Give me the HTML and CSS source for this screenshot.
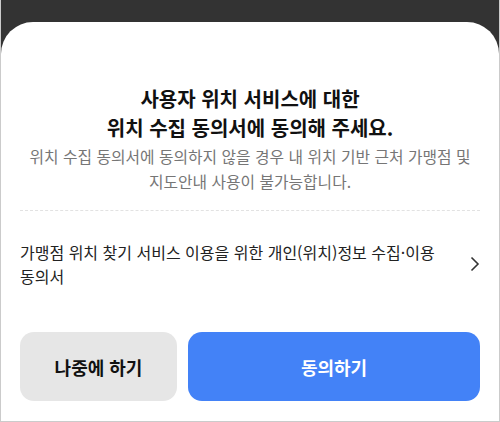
FILE: index.html
```html
<!DOCTYPE html>
<html lang="ko">
<head>
    <meta charset="UTF-8">
    <meta name="viewport" content="width=device-width, initial-scale=1.0">
    <title>위치 수집 동의</title>
    <link rel="stylesheet" href="styles.css">
</head>
<body>
    <div class="screen">
        <div class="dim"></div>
        <div class="sheet">
            <h1 class="title">사용자 위치 서비스에 대한<br>위치 수집 동의서에 동의해 주세요.</h1>
            <p class="desc">위치 수집 동의서에 동의하지 않을 경우 내 위치 기반 근처 가맹점 및<br>지도안내 사용이 불가능합니다.</p>
            <div class="divider"></div>
            <a class="terms" href="#">
                <span class="terms-text">가맹점 위치 찾기 서비스 이용을 위한 개인(위치)정보 수집·이용 동의서</span>
                <svg class="chevron" width="10" height="16" viewBox="0 0 10 16">
                    <path d="M1.5 1.5 L8 8 L1.5 14.5" fill="none" stroke="#333" stroke-width="1.6"/>
                </svg>
            </a>
            <div class="actions">
                <button class="btn btn-later" type="button">나중에 하기</button>
                <button class="btn btn-agree" type="button">동의하기</button>
            </div>
        </div>
    </div>
</body>
</html>
```

FILE: styles.css
```css
html, body {
    margin: 0;
    padding: 0;
}
body {
    font-family: "Noto Sans CJK KR", "Noto Sans", sans-serif;
    background-color: #fff;
    word-break: keep-all;
}
.screen {
    width: 500px;
    height: 422px;
    box-sizing: border-box;
    border: 1px solid #cbcbcb;
    border-top: 0;
    background-color: #333;
    display: flex;
    flex-direction: column;
    overflow: hidden;
}
.dim {
    height: 22px;
    flex-shrink: 0;
}
.sheet {
    flex: 1;
    background-color: #fff;
    border-radius: 32px 32px 0 0;
    padding: 62px 19px 0;
    display: flex;
    flex-direction: column;
}
.title {
    margin: 0;
    text-align: center;
    font-size: 20px;
    line-height: 29px;
    font-weight: 700;
    color: #111;
}
.desc {
    margin: 2px 0 0;
    text-align: center;
    font-size: 15.8px;
    line-height: 25px;
    color: #767676;
}
.divider {
    margin-top: 16px;
    border-top: 1px dashed #e2e2e2;
}
.terms {
    display: flex;
    align-items: center;
    padding-top: 29px;
    text-decoration: none;
    color: #222;
}
.terms-text {
    flex: 1;
    max-width: 430px;
    font-size: 16px;
    line-height: 24px;
}
.chevron {
    margin-left: auto;
    flex-shrink: 0;
}
.actions {
    display: flex;
    gap: 11px;
    margin-top: 44px;
}
.btn {
    height: 69px;
    border: 0;
    border-radius: 14px;
    font-family: inherit;
    font-size: 18px;
    font-weight: 700;
    cursor: pointer;
}
.btn-later {
    width: 157px;
    background-color: #e6e6e6;
    color: #111;
}
.btn-agree {
    flex: 1;
    background-color: #4382f7;
    color: #fff;
}
```
